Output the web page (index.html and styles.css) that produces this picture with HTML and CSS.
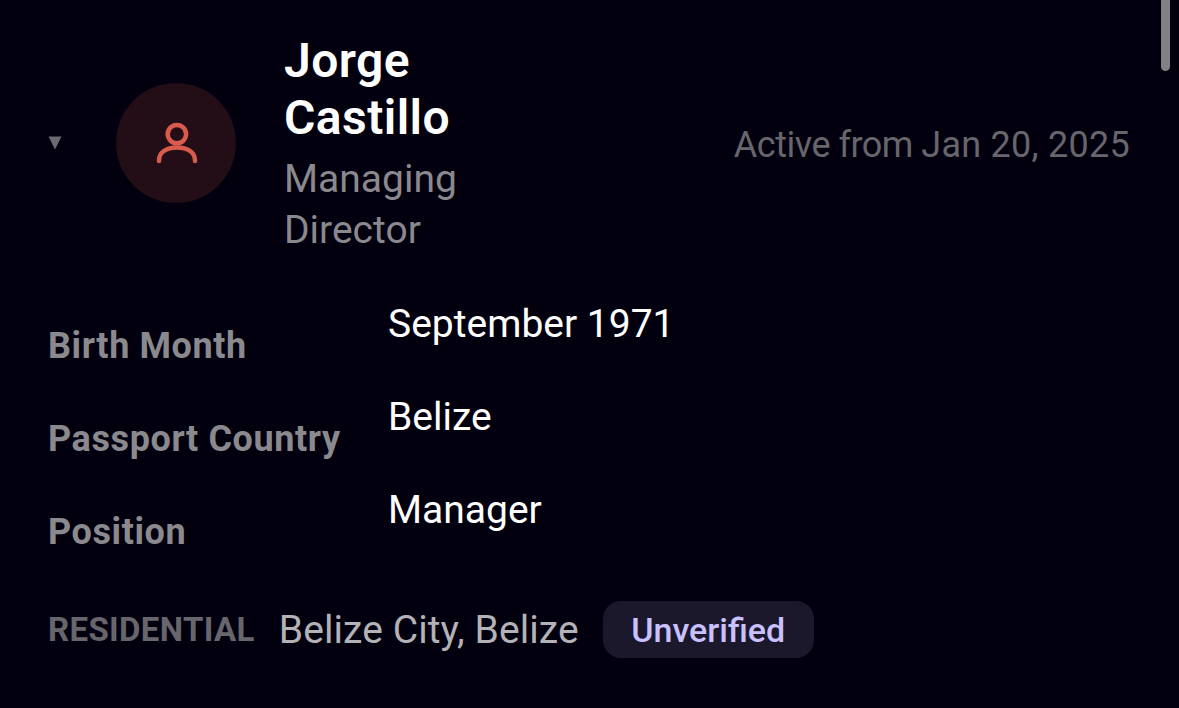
FILE: index.html
```html
<!DOCTYPE html>
<html lang="en">
<head>
  <meta charset="UTF-8">
  <meta name="viewport" content="width=device-width, initial-scale=1.0">
  <title>Officer details</title>
  <link rel="stylesheet" href="styles.css">
</head>
<body>
  <main class="officer">
    <header class="officer-header">
      <svg class="caret" viewBox="0 0 14 14"><path d="M.5 .5h13L7 13.5z"/></svg>
      <div class="avatar">
        <svg viewBox="0 0 48 48">
          <circle cx="24.9" cy="15.1" r="9.2"/>
          <path d="M7 42v-.5c0-8 7-13 18-13s18 5 18 13v.5"/>
        </svg>
      </div>
      <div class="identity">
        <h1>Jorge Castillo</h1>
        <p>Managing Director</p>
      </div>
      <span class="active-from">Active from <time>Jan 20, 2025</time></span>
    </header>

    <dl class="details">
      <dt>Birth Month</dt>
      <dd>September 1971</dd>
      <dt>Passport Country</dt>
      <dd>Belize</dd>
      <dt>Position</dt>
      <dd>Manager</dd>
    </dl>

    <div class="address">
      <span class="address-type">RESIDENTIAL</span>
      <span class="address-text">Belize City, Belize</span>
      <span class="badge">Unverified</span>
    </div>
  </main>
  <div class="scroll-thumb"></div>
</body>
</html>
```

FILE: styles.css
```css
* {
  box-sizing: border-box;
  margin: 0;
}
body {
  height: 708px;
  overflow: hidden;
  background-color: #02000e;
  color: #fff;
  font-family: Roboto, sans-serif;
}
.officer {
  padding: 30px 49px 0 48px;
}
.officer-header {
  display: flex;
  align-items: center;
  height: 226px;
}
.caret {
  width: 14px;
  height: 14px;
  fill: #6b6a70;
}
.avatar {
  display: flex;
  align-items: center;
  justify-content: center;
  width: 120px;
  height: 120px;
  margin-left: 54px;
  border-radius: 50%;
  background-color: #230d17;
}
.avatar svg {
  width: 48px;
  height: 48px;
  fill: none;
  stroke: #d95b4b;
  stroke-width: 4.5;
  stroke-linecap: round;
}
.identity {
  width: 200px;
  margin-left: 48px;
  padding-top: 2px;
}
.identity h1 {
  margin-bottom: 8px;
  font-size: 48px;
  font-weight: 600;
  line-height: 57px;
  letter-spacing: 0.45px;
}
.identity p {
  color: #8a898e;
  font-size: 39px;
  line-height: 51px;
}
.active-from {
  margin-left: auto;
  padding-top: 4px;
  color: #67666c;
  font-size: 36px;
  letter-spacing: -0.5px;
}
.active-from time {
  letter-spacing: 0.25px;
}
.details {
  display: grid;
  grid-template-columns: 340px 1fr;
  grid-auto-rows: 93px;
  margin-top: 41px;
}
.details dt {
  padding-top: 22px;
  color: #8a898e;
  font-size: 36px;
  font-weight: 700;
  line-height: 54px;
  letter-spacing: 0.6px;
}
.details dd {
  font-size: 39px;
  line-height: 54px;
}
.address {
  display: flex;
  align-items: center;
  height: 57px;
  margin-top: 25px;
}
.address-type {
  color: #67666c;
  font-size: 33px;
  font-weight: 700;
  letter-spacing: 0.35px;
}
.address-text {
  margin-left: 24px;
  color: #b3b2b7;
  font-size: 39px;
  letter-spacing: 0.08px;
}
.badge {
  width: 211px;
  height: 57px;
  margin-left: 24px;
  border-radius: 18px;
  background-color: #1b182b;
  color: #c9c1ff;
  font-size: 34px;
  font-weight: 500;
  line-height: 58px;
  text-align: center;
}
/* sits over the page edge */
.scroll-thumb {
  position: absolute;
  top: -20px;
  right: 9px;
  width: 9px;
  height: 91px;
  border-radius: 5px;
  background-color: #808085;
}
```
